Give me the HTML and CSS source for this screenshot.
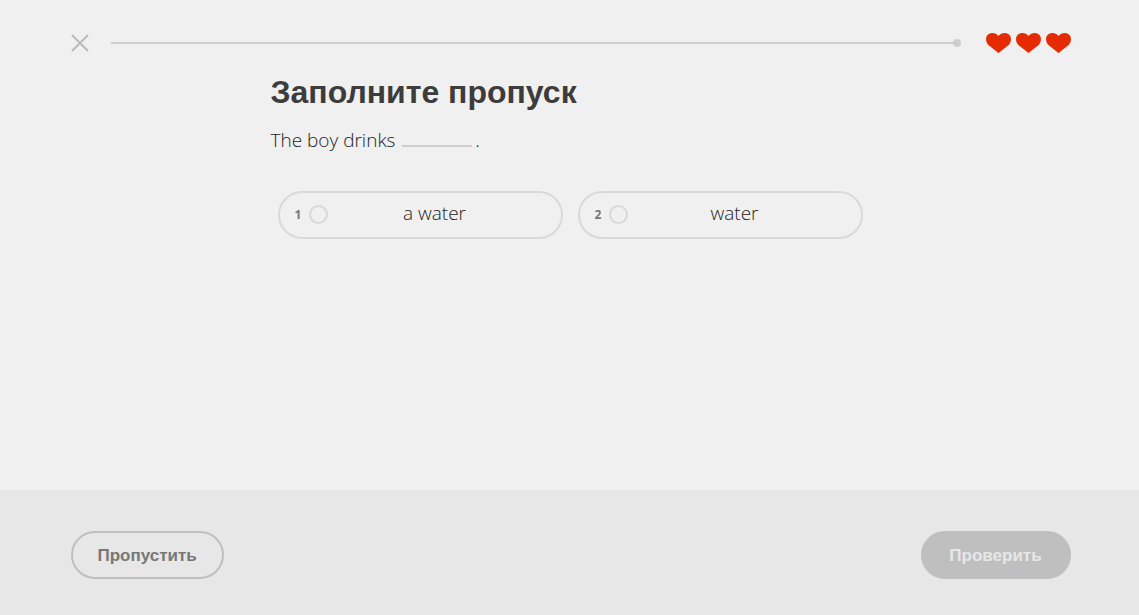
FILE: index.html
```html
<!DOCTYPE html>
<html lang="ru">
<head>
    <meta charset="UTF-8">
    <meta name="viewport" content="width=device-width, initial-scale=1">
    <title>Заполните пропуск</title>
    <link rel="stylesheet" href="styles.css">
</head>
<body>
<header class="top wrap">
    <button type="button" class="close" aria-label="Закрыть">
        <svg width="18" height="18" viewBox="0 0 18 18"><path d="M1 1L17 17M17 1L1 17" fill="none" stroke="#bababa" stroke-width="2"/></svg>
    </button>
    <div class="progress"><span class="dot"></span></div>
    <div class="hearts">
        <svg width="25" height="20" viewBox="0 0 25 20"><path d="M12.5 20L3 12.500C-1 9-.7 3.300 2.400 1.200C5.700-.9 10.200 0 12.500 3C14.800 0 19.300-.9 22.600 1.200C25.700 3.300 26 9 22 12.500Z" fill="#e42b04"/></svg>
        <svg width="25" height="20" viewBox="0 0 25 20"><path d="M12.5 20L3 12.500C-1 9-.7 3.300 2.400 1.200C5.700-.9 10.200 0 12.500 3C14.800 0 19.300-.9 22.600 1.200C25.700 3.300 26 9 22 12.500Z" fill="#e42b04"/></svg>
        <svg width="25" height="20" viewBox="0 0 25 20"><path d="M12.5 20L3 12.500C-1 9-.7 3.300 2.400 1.200C5.700-.9 10.200 0 12.500 3C14.800 0 19.300-.9 22.600 1.200C25.700 3.300 26 9 22 12.500Z" fill="#e42b04"/></svg>
    </div>
</header>
<main class="task">
    <h1>Заполните пропуск</h1>
    <p class="sentence">The boy drinks <span class="blank"></span> .</p>
    <div class="options">
        <label class="option">
            <span class="num">1</span>
            <input type="radio" name="answer">
            <span class="word">a water</span>
        </label>
        <label class="option">
            <span class="num">2</span>
            <input type="radio" name="answer">
            <span class="word">water</span>
        </label>
    </div>
</main>
<footer class="bottom">
    <div class="controls wrap">
        <button type="button" class="btn skip">Пропустить</button>
        <button type="button" class="btn check" disabled>Проверить</button>
    </div>
</footer>
</body>
</html>
```
FILE: styles.css
```css
* {
    box-sizing: border-box;
    margin: 0;
    padding: 0;
}

body {
    display: flex;
    flex-direction: column;
    min-height: 100vh;
    background: #f0f0f0;
    color: #222;
    font-family: "Open Sans", "Liberation Sans", sans-serif;
    font-weight: 300;
    font-size: 19px;
}

.wrap {
    width: 100%;
    max-width: 1002px;
    margin: 0 auto;
    padding-left: 2px;
}

.top {
    display: flex;
    align-items: center;
    padding-top: 33px;
}

.close {
    width: 18px;
    height: 18px;
    border: 0;
    background: none;
    cursor: pointer;
}

.close svg,
.hearts svg {
    display: block;
}

.progress {
    display: flex;
    flex: 1;
    align-items: center;
    justify-content: flex-end;
    height: 2px;
    margin: 0 25px 0 22px;
    background: #cecece;
}

.dot {
    flex: none;
    width: 8px;
    height: 8px;
    border-radius: 50%;
    background: #cecece;
}

.hearts {
    display: flex;
    gap: 5px;
}

.task {
    flex: 1;
    width: 100%;
    max-width: 602px;
    margin: 0 auto;
    padding: 19px 0 20px 2px;
}

h1 {
    color: #3c3c3c;
    font-family: "Liberation Sans", sans-serif;
    font-size: 32px;
    font-weight: bold;
    line-height: 40px;
}

.sentence {
    margin-top: 16px;
    line-height: 24px;
}

.blank {
    display: inline-block;
    width: 70px;
    height: 2px;
    margin: 0 -2px 0 2px;
    vertical-align: baseline;
    background: #cecece;
}

.options {
    display: grid;
    grid-template-columns: 1fr 1fr;
    gap: 15px;
    margin-top: 39px;
    padding: 0 8px 0 7px;
}

.option {
    display: flex;
    align-items: center;
    height: 48px;
    padding: 0 15px 2px;
    border: 2px solid #d9d9d9;
    border-radius: 24px;
    cursor: pointer;
}

.num {
    width: 14px;
    color: #777;
    font-size: 12px;
    font-weight: bold;
}

.option input {
    width: 19px;
    height: 19px;
    border: 2px solid #d9d9d9;
    border-radius: 50%;
    appearance: none;
}

.option input:checked {
    background: #bbb;
}

.word {
    flex: 1;
    padding: 0 4px 2px 0;
    line-height: 24px;
    text-align: center;
}

.bottom {
    padding: 41px 0 36px;
    background: #e7e7e7;
}

.controls {
    display: flex;
    justify-content: space-between;
}

.btn {
    height: 48px;
    min-width: 150px;
    padding: 2px 25px 0;
    border: 2px solid #bfbfbf;
    border-radius: 24px;
    font: bold 17px "Liberation Sans", sans-serif;
    cursor: pointer;
}

.skip {
    background: none;
    color: #777;
}

.check {
    background: #bfbfbf;
    color: #e7e7e7;
    cursor: default;
}
```
